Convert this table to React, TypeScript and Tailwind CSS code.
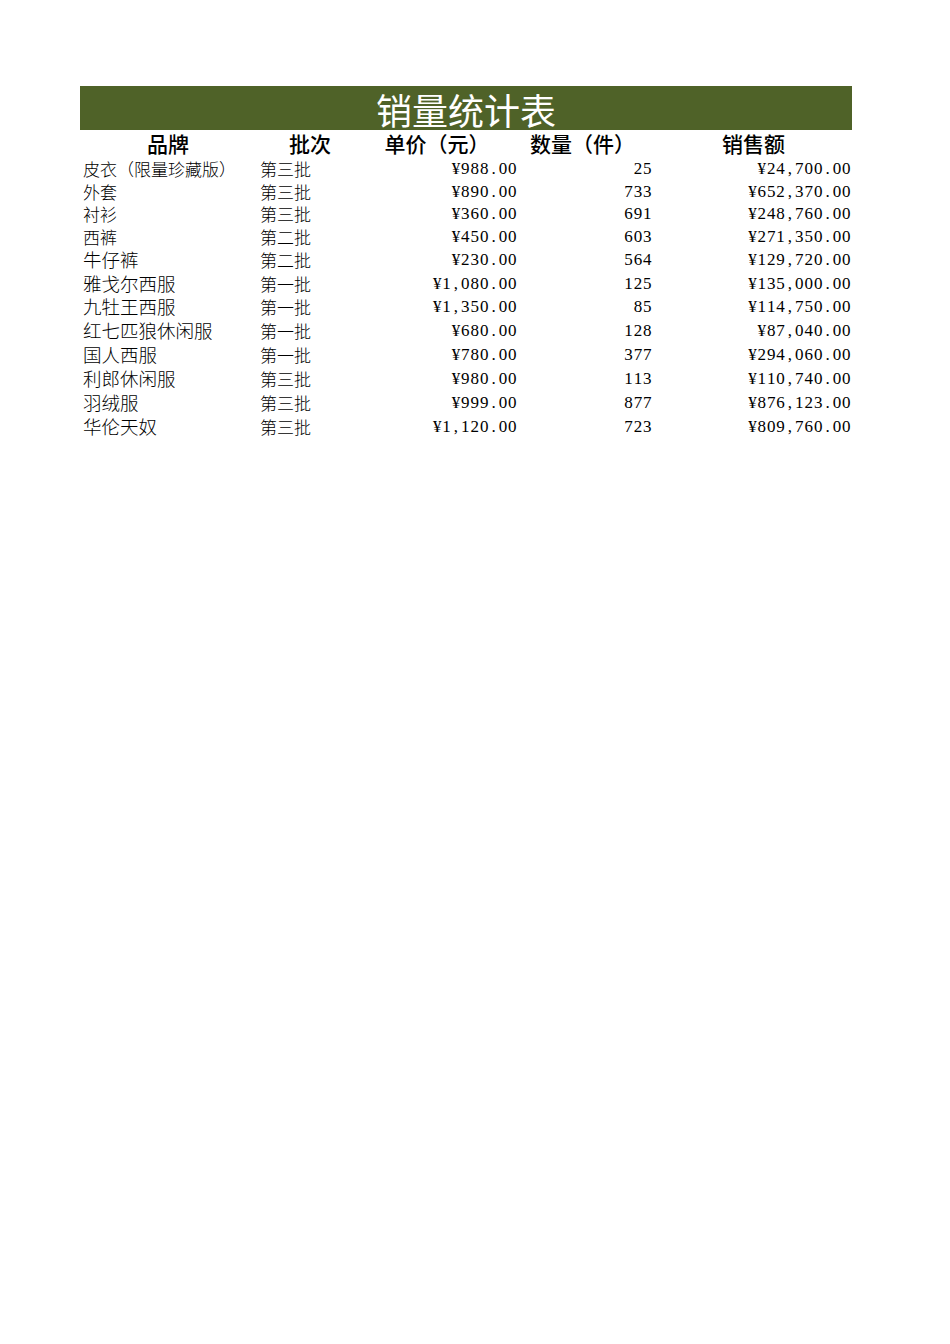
import React from 'react';

const rows = [
  { name: '皮衣（限量珍藏版）', batch: '第三批', price: '¥988.00', qty: '25', total: '¥24,700.00', h: 'h-[23px]', big: false },
  { name: '外套', batch: '第三批', price: '¥890.00', qty: '733', total: '¥652,370.00', h: 'h-[22px]', big: false },
  { name: '衬衫', batch: '第三批', price: '¥360.00', qty: '691', total: '¥248,760.00', h: 'h-[23px]', big: false },
  { name: '西裤', batch: '第二批', price: '¥450.00', qty: '603', total: '¥271,350.00', h: 'h-[22px]', big: false },
  { name: '牛仔裤', batch: '第二批', price: '¥230.00', qty: '564', total: '¥129,720.00', h: 'h-[24px]', big: true },
  { name: '雅戈尔西服', batch: '第一批', price: '¥1,080.00', qty: '125', total: '¥135,000.00', h: 'h-[24px]', big: true },
  { name: '九牡王西服', batch: '第一批', price: '¥1,350.00', qty: '85', total: '¥114,750.00', h: 'h-[23px]', big: true },
  { name: '红七匹狼休闲服', batch: '第一批', price: '¥680.00', qty: '128', total: '¥87,040.00', h: 'h-[24px]', big: true },
  { name: '国人西服', batch: '第一批', price: '¥780.00', qty: '377', total: '¥294,060.00', h: 'h-[24px]', big: true },
  { name: '利郎休闲服', batch: '第三批', price: '¥980.00', qty: '113', total: '¥110,740.00', h: 'h-[24px]', big: true },
  { name: '羽绒服', batch: '第三批', price: '¥999.00', qty: '877', total: '¥876,123.00', h: 'h-[24px]', big: true },
  { name: '华伦天奴', batch: '第三批', price: '¥1,120.00', qty: '723', total: '¥809,760.00', h: 'h-[24px]', big: true },
];

const cjk = "font-['Noto_Sans_CJK_SC',sans-serif]";
const cols = 'grid grid-cols-[176px_108px_156px_135px_197px]';

// SimSun-style half-width figures: every character gets the same cell width
function Mono({ text }: { text: string }) {
  return (
    <span className="inline-flex justify-end font-['Liberation_Serif',serif] text-[17px]">
      {text.split('').map((c, i) => (
        <span key={i} className="inline-block w-[9.4px] text-center">
          {c}
        </span>
      ))}
    </span>
  );
}

export default function App() {
  return (
    <div className="min-h-screen w-[950px] bg-white pt-[86px] pl-[80px]">
      <div className="w-[772px]">
        {/* title */}
        <div className={`h-[44px] bg-[#4f6228] flex items-center justify-center text-white text-[36px] leading-none ${cjk}`}>
          <span className="pt-[1px]">销量统计表</span>
        </div>

        {/* header */}
        <div className={`${cols} h-[27px] items-center text-[21px] font-medium text-black leading-none ${cjk}`}>
          <div className="text-center">品牌</div>
          <div className="text-center">批次</div>
          <div className="text-center pr-[10px]">单价（元）</div>
          <div className="text-center pr-[10px]">数量（件）</div>
          <div className="text-center">销售额</div>
        </div>

        {/* rows */}
        {rows.map((r) => (
          <div key={r.name} className={`${cols} items-center text-black leading-none ${r.h}`}>
            <div className={`pl-[3px] whitespace-nowrap font-light ${cjk} ${r.big ? 'text-[18.5px]' : 'text-[17px]'}`}>{r.name}</div>
            <div className={`pl-[4px] font-light text-[17px] ${cjk}`}>{r.batch}</div>
            <div className="text-right pr-[3px]"><Mono text={r.price} /></div>
            <div className="text-right pr-[3px]"><Mono text={r.qty} /></div>
            <div className="text-right pr-[1px]"><Mono text={r.total} /></div>
          </div>
        ))}
      </div>
    </div>
  );
}
